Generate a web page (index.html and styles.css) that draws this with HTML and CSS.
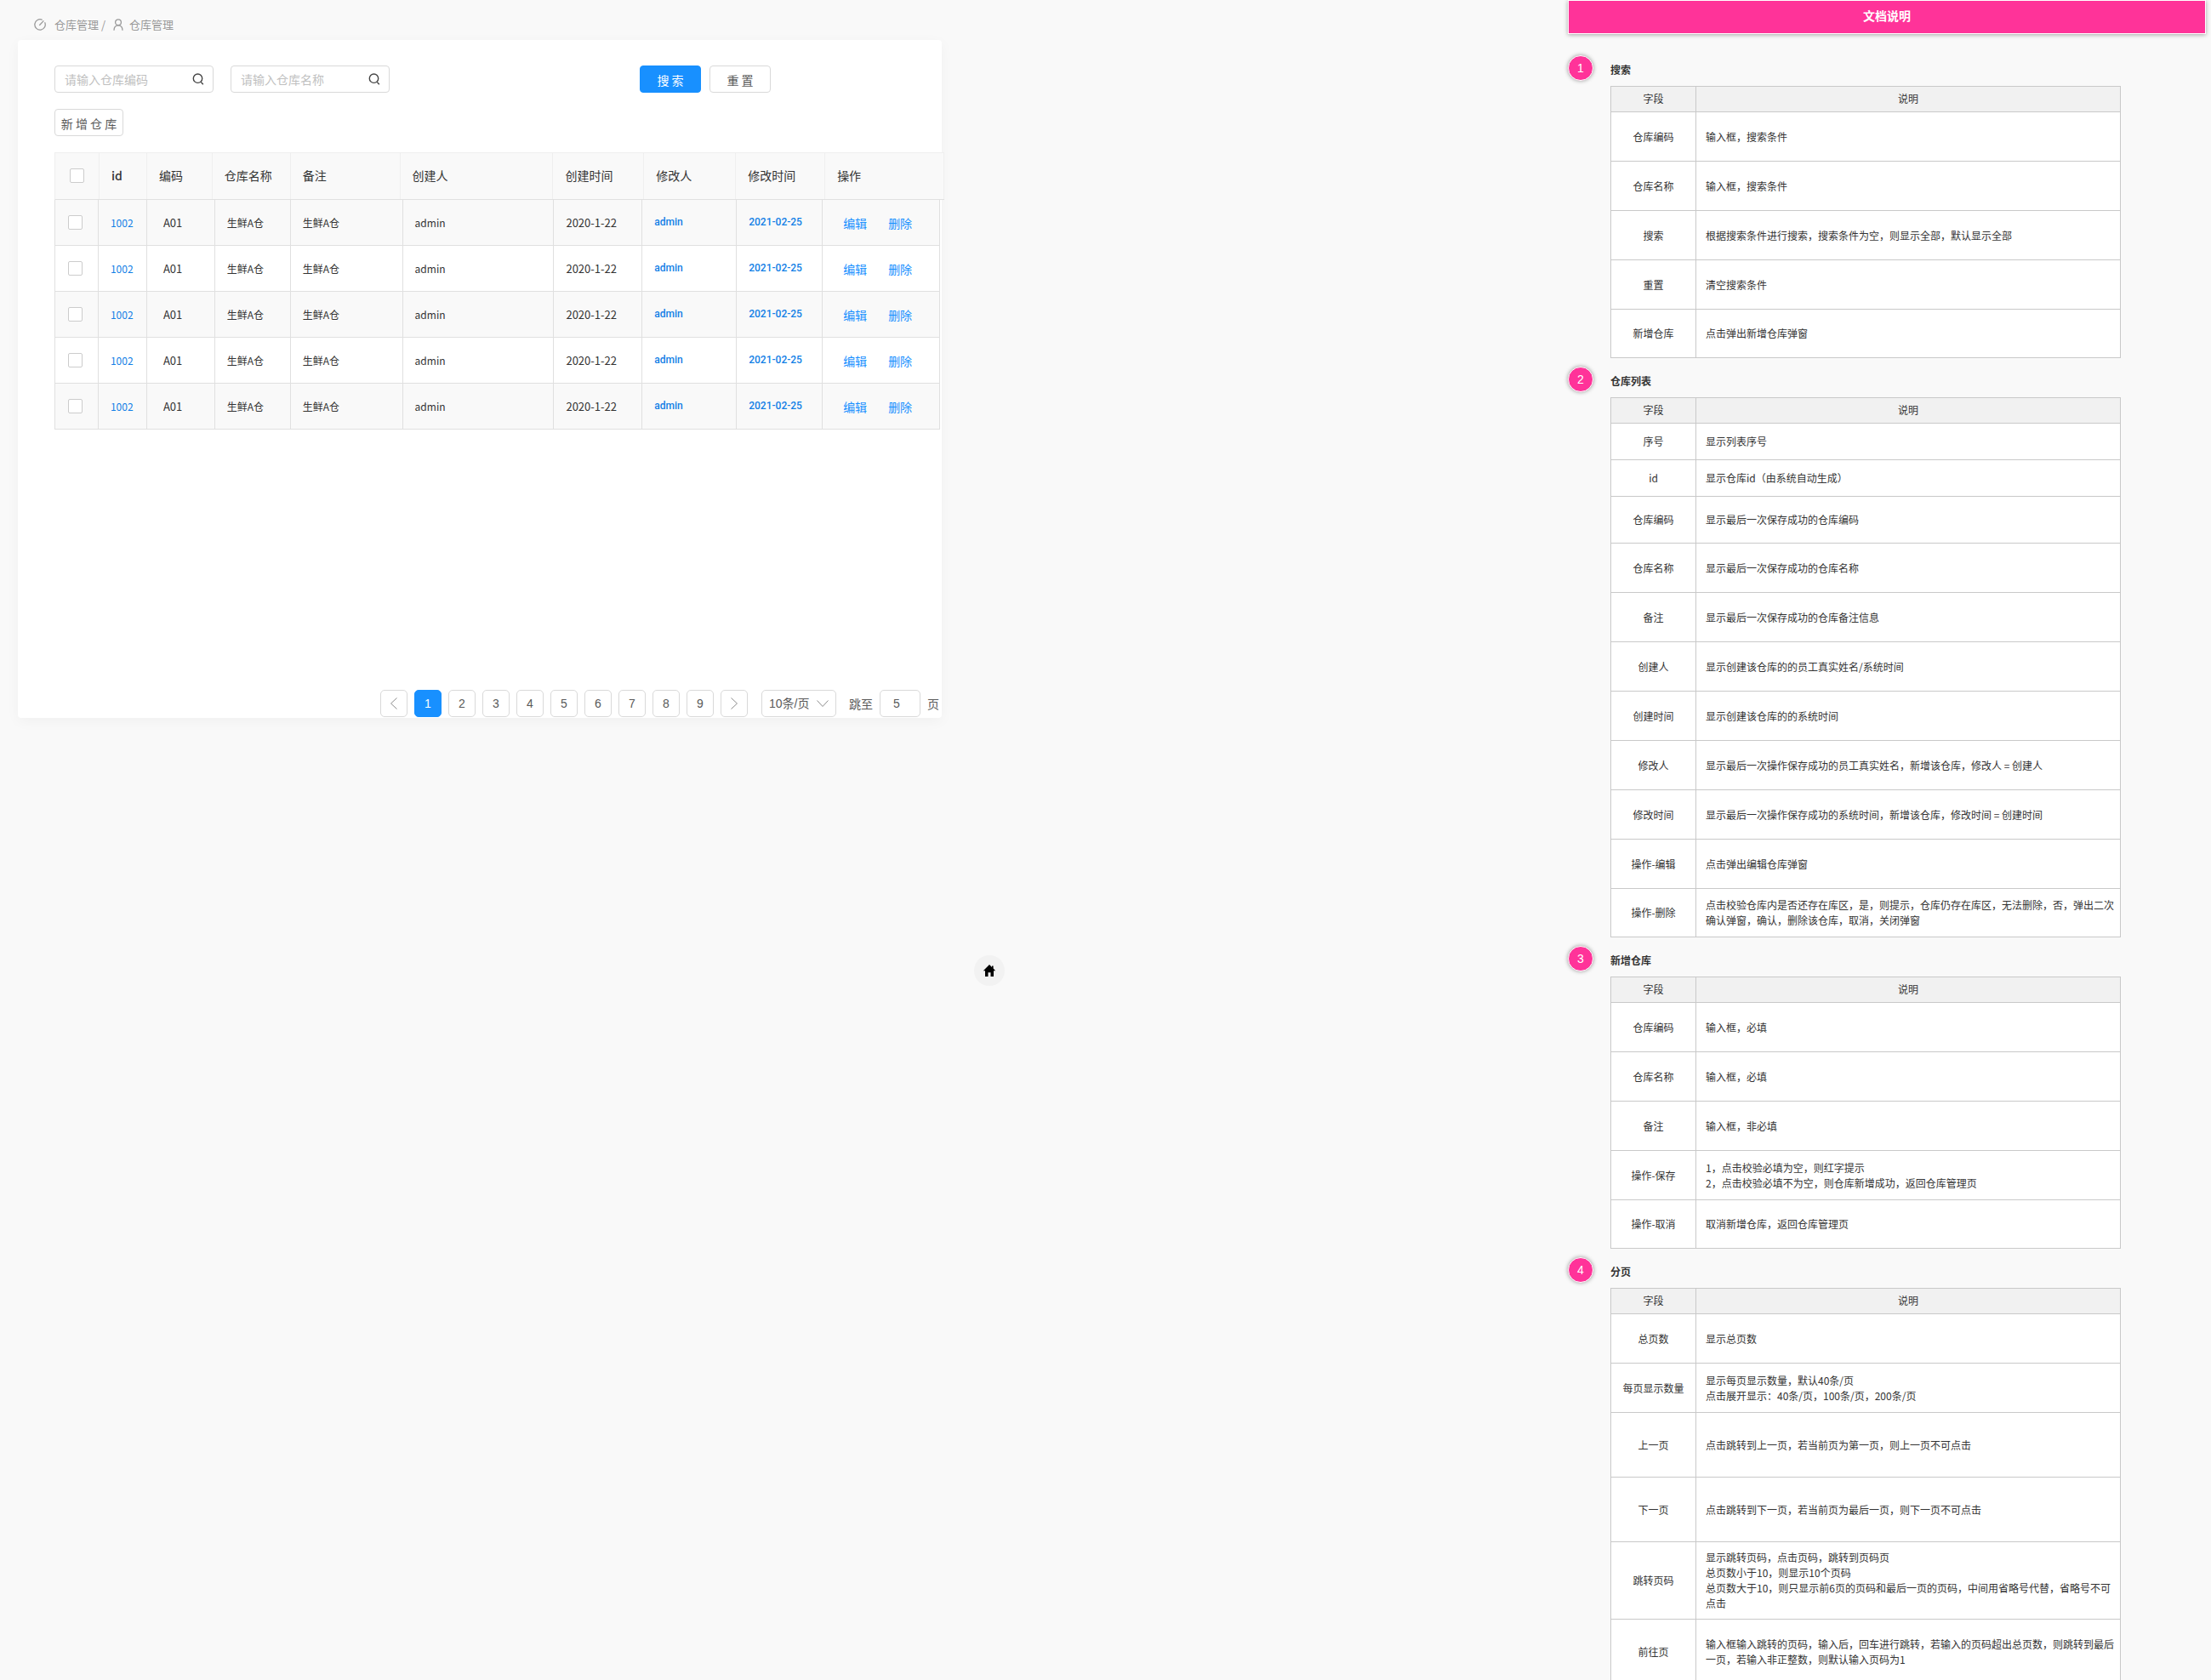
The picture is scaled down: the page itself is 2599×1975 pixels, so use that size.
FILE: index.html
```html
<!DOCTYPE html>
<html lang="zh-CN">
<head>
<meta charset="utf-8">
<meta name="viewport" content="width=device-width, initial-scale=1">
<title>仓库管理</title>
<link rel="stylesheet" href="styles.css">
</head>
<body>
<div class="page">
  <main class="workspace">
    <nav class="crumbs" aria-label="面包屑">
      <svg class="icon-dash" viewBox="0 0 14 14"><path d="M12.6 4.2A6.2 6.2 0 1 1 9.6 1.3M6.3 7.8 11.4 2.4"/></svg>
      <a href="#">仓库管理 /</a>
      <svg class="icon-user" viewBox="0 0 12 14"><circle cx="6" cy="4.2" r="3.4"/><path d="M1 13.800C1 9.700 3.200 7.800 6 7.800S11 9.700 11 13.800"/></svg>
      <a href="#">仓库管理</a>
    </nav>

    <section class="card">
      <form class="filters">
        <div class="search">
          <input class="search-input" type="text" aria-label="仓库编码" placeholder="请输入仓库编码">
          <button class="search-btn" type="button" aria-label="查询编码"><svg viewBox="0 0 14 14"><circle cx="6.500" cy="6.200" r="5.200"/><path d="M10.200 10.400 12.800 13.300"/></svg></button>
        </div>
        <div class="search">
          <input class="search-input" type="text" aria-label="仓库名称" placeholder="请输入仓库名称">
          <button class="search-btn" type="button" aria-label="查询名称"><svg viewBox="0 0 14 14"><circle cx="6.500" cy="6.200" r="5.200"/><path d="M10.200 10.400 12.800 13.300"/></svg></button>
        </div>
        <div class="filter-actions">
          <button class="btn btn-primary" type="button">搜 索</button>
          <button class="btn" type="button">重 置</button>
        </div>
      </form>
      <button class="btn btn-add" type="button">新 增 仓 库</button>

      <table class="grid">
        <thead>
          <tr><th><input type="checkbox" aria-label="全选"></th><th class="strong">id</th><th>编码</th><th>仓库名称</th><th>备注</th><th>创建人</th><th>创建时间</th><th>修改人</th><th>修改时间</th><th>操作</th></tr>
        </thead>
        <tbody>
          <tr><td><input type="checkbox" aria-label="选择第1行"></td><td><a href="#">1002</a></td><td class="num code">A01</td><td>生鲜A仓</td><td>生鲜A仓</td><td>admin</td><td class="num">2020-1-22</td><td class="mod">admin</td><td class="mod">2021-02-25</td><td class="ops"><a href="#">编辑</a><a href="#">删除</a></td></tr>
          <tr><td><input type="checkbox" aria-label="选择第2行"></td><td><a href="#">1002</a></td><td class="num code">A01</td><td>生鲜A仓</td><td>生鲜A仓</td><td>admin</td><td class="num">2020-1-22</td><td class="mod">admin</td><td class="mod">2021-02-25</td><td class="ops"><a href="#">编辑</a><a href="#">删除</a></td></tr>
          <tr><td><input type="checkbox" aria-label="选择第3行"></td><td><a href="#">1002</a></td><td class="num code">A01</td><td>生鲜A仓</td><td>生鲜A仓</td><td>admin</td><td class="num">2020-1-22</td><td class="mod">admin</td><td class="mod">2021-02-25</td><td class="ops"><a href="#">编辑</a><a href="#">删除</a></td></tr>
          <tr><td><input type="checkbox" aria-label="选择第4行"></td><td><a href="#">1002</a></td><td class="num code">A01</td><td>生鲜A仓</td><td>生鲜A仓</td><td>admin</td><td class="num">2020-1-22</td><td class="mod">admin</td><td class="mod">2021-02-25</td><td class="ops"><a href="#">编辑</a><a href="#">删除</a></td></tr>
          <tr><td><input type="checkbox" aria-label="选择第5行"></td><td><a href="#">1002</a></td><td class="num code">A01</td><td>生鲜A仓</td><td>生鲜A仓</td><td>admin</td><td class="num">2020-1-22</td><td class="mod">admin</td><td class="mod">2021-02-25</td><td class="ops"><a href="#">编辑</a><a href="#">删除</a></td></tr>
        </tbody>
      </table>

      <nav class="pager" aria-label="分页">
        <button class="page-btn" type="button" aria-label="上一页"><svg viewBox="0 0 14 14"><path d="M10.500 0.500 3.500 7 10.500 13.500"/></svg></button>
        <button class="page-btn current" type="button">1</button>
        <button class="page-btn" type="button">2</button>
        <button class="page-btn" type="button">3</button>
        <button class="page-btn" type="button">4</button>
        <button class="page-btn" type="button">5</button>
        <button class="page-btn" type="button">6</button>
        <button class="page-btn" type="button">7</button>
        <button class="page-btn" type="button">8</button>
        <button class="page-btn" type="button">9</button>
        <button class="page-btn" type="button" aria-label="下一页"><svg viewBox="0 0 14 14"><path d="M3.500 0.500 10.500 7 3.500 13.500"/></svg></button>
        <div class="size">
          <select class="size-select" aria-label="每页条数"><option>10条/页</option></select>
          <svg class="size-arrow" viewBox="0 0 14 14"><path d="M0.500 3.500 7 10.500 13.500 3.500"/></svg>
        </div>
        <label class="jump" for="jump">跳至</label>
        <input class="jump-input" id="jump" type="text" value="5">
        <span class="jump-unit">页</span>
      </nav>
    </section>
  </main>

  <div class="canvas">
    <a class="home" href="#" aria-label="首页"><svg viewBox="0 0 16 16"><path d="M8 1 0.800 8.200H3V15H6.500V10.200H9.500V15H13V8.200H15.200L12.600 5.600V2.500H11V4Z"/></svg></a>
  </div>

  <aside class="doc">
    <h1 class="banner">文档说明</h1>

    <section class="note">
      <header class="note-head"><span class="badge">1</span><h2>搜索</h2></header>
      <table class="spec">
        <colgroup><col class="col-key"><col></colgroup>
        <thead><tr><th>字段</th><th>说明</th></tr></thead>
        <tbody>
          <tr><th>仓库编码</th><td>输入框，搜索条件</td></tr>
          <tr><th>仓库名称</th><td>输入框，搜索条件</td></tr>
          <tr><th>搜索</th><td>根据搜索条件进行搜索，搜索条件为空，则显示全部，默认显示全部</td></tr>
          <tr><th>重置</th><td>清空搜索条件</td></tr>
          <tr><th>新增仓库</th><td>点击弹出新增仓库弹窗</td></tr>
        </tbody>
      </table>
    </section>

    <section class="note">
      <header class="note-head"><span class="badge">2</span><h2>仓库列表</h2></header>
      <table class="spec">
        <colgroup><col class="col-key"><col></colgroup>
        <thead><tr><th>字段</th><th>说明</th></tr></thead>
        <tbody>
          <tr class="short"><th>序号</th><td>显示列表序号</td></tr>
          <tr class="short"><th>id</th><td>显示仓库id（由系统自动生成）</td></tr>
          <tr class="medium"><th>仓库编码</th><td>显示最后一次保存成功的仓库编码</td></tr>
          <tr><th>仓库名称</th><td>显示最后一次保存成功的仓库名称</td></tr>
          <tr><th>备注</th><td>显示最后一次保存成功的仓库备注信息</td></tr>
          <tr><th>创建人</th><td>显示创建该仓库的的员工真实姓名/系统时间</td></tr>
          <tr><th>创建时间</th><td>显示创建该仓库的的系统时间</td></tr>
          <tr><th>修改人</th><td>显示最后一次操作保存成功的员工真实姓名，新增该仓库，修改人 = 创建人</td></tr>
          <tr><th>修改时间</th><td>显示最后一次操作保存成功的系统时间，新增该仓库，修改时间 = 创建时间</td></tr>
          <tr><th>操作-编辑</th><td>点击弹出编辑仓库弹窗</td></tr>
          <tr><th>操作-删除</th><td>点击校验仓库内是否还存在库区，是，则提示，仓库仍存在库区，无法删除，否，弹出二次确认弹窗，确认，删除该仓库，取消，关闭弹窗</td></tr>
        </tbody>
      </table>
    </section>

    <section class="note">
      <header class="note-head"><span class="badge">3</span><h2>新增仓库</h2></header>
      <table class="spec">
        <colgroup><col class="col-key"><col></colgroup>
        <thead><tr><th>字段</th><th>说明</th></tr></thead>
        <tbody>
          <tr><th>仓库编码</th><td>输入框，必填</td></tr>
          <tr><th>仓库名称</th><td>输入框，必填</td></tr>
          <tr><th>备注</th><td>输入框，非必填</td></tr>
          <tr><th>操作-保存</th><td>1，点击校验必填为空，则红字提示<br>2，点击校验必填不为空，则仓库新增成功，返回仓库管理页</td></tr>
          <tr><th>操作-取消</th><td>取消新增仓库，返回仓库管理页</td></tr>
        </tbody>
      </table>
    </section>

    <section class="note">
      <header class="note-head"><span class="badge">4</span><h2>分页</h2></header>
      <table class="spec">
        <colgroup><col class="col-key"><col></colgroup>
        <thead><tr><th>字段</th><th>说明</th></tr></thead>
        <tbody>
          <tr><th>总页数</th><td>显示总页数</td></tr>
          <tr><th>每页显示数量</th><td>显示每页显示数量，默认40条/页<br>点击展开显示：40条/页，100条/页，200条/页</td></tr>
          <tr class="tall"><th>上一页</th><td>点击跳转到上一页，若当前页为第一页，则上一页不可点击</td></tr>
          <tr class="tall"><th>下一页</th><td>点击跳转到下一页，若当前页为最后一页，则下一页不可点击</td></tr>
          <tr class="taller"><th>跳转页码</th><td>显示跳转页码，点击页码，跳转到页码页<br>总页数小于10，则显示10个页码<br>总页数大于10，则只显示前6页的页码和最后一页的页码，中间用省略号代替，省略号不可点击</td></tr>
          <tr class="tall"><th>前往页</th><td>输入框输入跳转的页码，输入后，回车进行跳转，若输入的页码超出总页数，则跳转到最后一页，若输入非正整数，则默认输入页码为1</td></tr>
        </tbody>
      </table>
    </section>
  </aside>
</div>
</body>
</html>
```
FILE: styles.css
```css
* {
  box-sizing: border-box;
}

body {
  margin: 0;
  background: #f9f9f9;
  color: #333;
  font: 12px/18px "Noto Sans CJK SC", sans-serif;
}

button,
input,
select {
  margin: 0;
  font: inherit;
  color: inherit;
}

a {
  color: inherit;
  text-decoration: none;
}

svg {
  fill: none;
  stroke: currentColor;
}

.page {
  display: grid;
  grid-template-columns: 1107fr 736fr 750fr;
  height: 100vh;
  padding-right: 6px;
  overflow: hidden;
}

/* Left: the warehouse list */

.workspace {
  min-width: 0;
}

.crumbs {
  display: flex;
  align-items: center;
  height: 47px;
  padding: 11px 0 0 40px;
  color: #999;
  font-size: 13px;
}

.icon-dash {
  width: 14px;
  height: 14px;
  margin-right: 10px;
  stroke-width: 1.3;
}

.icon-user {
  width: 12px;
  height: 14px;
  margin: 0 7px 0 9px;
  stroke-width: 1.3;
}

.card {
  display: flex;
  flex-direction: column;
  min-height: 797px;
  margin-left: 21px;
  padding: 30px 0 1px 43px;
  border-radius: 4px;
  background: #fff;
  box-shadow: 0 4px 16px rgba(0, 0, 0, 0.04);
}

.filters {
  display: flex;
  gap: 20px;
}

.search {
  display: flex;
  align-items: center;
  width: 187px;
  height: 32px;
  border: 1px solid #d9d9d9;
  border-radius: 4px;
  background: #fff;
}

.search-input {
  flex: 1;
  min-width: 0;
  padding: 0 0 0 11px;
  border: 0;
  background: none;
  font-size: 14px;
  outline: 0;
}

.search-input::placeholder {
  color: #bfbfbf;
}

.search-btn {
  display: flex;
  padding: 0 10px 0 0;
  border: 0;
  background: none;
  color: #444;
}

.search-btn svg {
  width: 14px;
  height: 14px;
  stroke-width: 1.4;
}

.filter-actions {
  display: flex;
  gap: 10px;
  margin: 0 201px 0 auto;
}

.btn {
  width: 72px;
  height: 32px;
  padding: 1px 0 0;
  border: 1px solid #d9d9d9;
  border-radius: 4px;
  background: #fff;
  color: #595959;
  font-size: 14px;
}

.btn-primary {
  border-color: #1890ff;
  background: #1890ff;
  color: #fff;
}

.btn-add {
  width: 81px;
  margin: 19px 0;
}

.grid {
  display: block;
  margin-right: -3px;
}

.grid thead,
.grid tbody {
  display: block;
}

.grid tbody {
  margin-right: 5px;
}

.grid tr {
  display: grid;
}

.grid thead tr {
  grid-template-columns: 52fr 56fr 77fr 92fr 129fr 180fr 107fr 108fr 105fr 140fr;
  height: 56px;
  border: solid #efefef;
  border-width: 1px 0 1px 1px;
  border-bottom-color: #e0e0e0;
  background: #f9f9f9;
}

.grid tbody tr {
  grid-template-columns: 51fr 57fr 80fr 89fr 132fr 178fr 104fr 111fr 101fr 138fr;
  height: 54px;
  border: solid #e0e0e0;
  border-width: 0 0 1px 1px;
  background: #fff;
}

.grid tbody tr:nth-child(odd) {
  background: #f9f9f9;
}

.grid th,
.grid td {
  display: flex;
  align-items: center;
  padding: 0 0 0 14px;
  border-right: 1px solid #e0e0e0;
  white-space: nowrap;
}

.grid th {
  padding-bottom: 2px;
  border-right-color: #efefef;
  font-size: 14px;
  font-weight: 400;
}

.grid th.strong {
  font-weight: 500;
}

.grid td {
  padding-top: 1px;
}

.grid th:first-child {
  padding-left: 17px;
}

.grid td:first-child {
  padding: 0 0 0 15px;
}

.grid a {
  color: #1280e6;
}

.grid td.num {
  font-size: 13px;
}

.grid td.code {
  padding-left: 19px;
}

.grid td.mod {
  padding: 0 0 2px 14px;
  color: #1280e6;
  font-family: Roboto, sans-serif;
  font-weight: 500;
}

.grid td.ops {
  gap: 25px;
  padding-left: 24px;
  font-size: 14px;
}

.grid td.ops a {
  color: #1890ff;
}

.grid input {
  width: 17px;
  height: 17px;
  border: 1px solid #ccc;
  border-radius: 2px;
  background: #fff;
  appearance: none;
}

.pager {
  display: flex;
  align-items: center;
  justify-content: flex-end;
  gap: 8px;
  margin-top: auto;
  padding-right: 3px;
  color: #595959;
  font-family: "Liberation Sans", "Noto Sans CJK SC", sans-serif;
  font-size: 14px;
}

.page-btn {
  display: flex;
  align-items: center;
  justify-content: center;
  width: 32px;
  height: 32px;
  padding: 0;
  border: 1px solid #d9d9d9;
  border-radius: 5px;
  background: #fff;
}

.page-btn svg,
.size-arrow {
  width: 14px;
  height: 14px;
  color: #8c8c8c;
}

.page-btn.current {
  border-color: #1890ff;
  background: #1890ff;
  color: #fff;
}

.size {
  position: relative;
  margin-left: 8px;
}

.size-select {
  width: 88px;
  height: 32px;
  padding: 0 0 0 8px;
  border: 1px solid #d9d9d9;
  border-radius: 5px;
  background: #fff;
  appearance: none;
}

.size-arrow {
  position: absolute;
  top: 9px;
  right: 9px;
  pointer-events: none;
}

.jump {
  margin-left: 7px;
  padding-top: 1px;
}

.jump-unit {
  padding-top: 1px;
}

.jump-input {
  width: 48px;
  height: 32px;
  padding: 0 0 0 15px;
  border: 1px solid #d9d9d9;
  border-radius: 5px;
  background: #fff;
}

/* Middle: empty canvas with the home shortcut */

.canvas {
  padding: 1123px 0 0 38px;
}

.home {
  display: flex;
  align-items: center;
  justify-content: center;
  width: 36px;
  height: 36px;
  border-radius: 50%;
  background: #f2f2f2;
  color: #000;
}

.home svg {
  width: 16px;
  height: 16px;
  fill: currentColor;
  stroke: none;
}

/* Right: the document notes */

.banner {
  height: 40px;
  margin: 0 0 15px;
  border: 1px solid #fff;
  background: #f39;
  box-shadow: 0 1px 5px rgba(0, 0, 0, 0.35);
  color: #fff;
  font-size: 14px;
  line-height: 34px;
  text-align: center;
}

.note-head {
  display: flex;
  align-items: flex-end;
  gap: 20px;
  height: 46px;
}

.badge {
  width: 30px;
  height: 30px;
  margin-bottom: 6px;
  border: 1px solid #fff;
  border-radius: 50%;
  background: #f39;
  box-shadow: 0 0 5px rgba(0, 0, 0, 0.4);
  color: #fff;
  font: 14px/28px "Liberation Sans", sans-serif;
  text-align: center;
}

.note-head h2 {
  margin: 0 0 10px;
  font-size: 12px;
}

.spec {
  width: 80%;
  margin-left: 50px;
  border-collapse: collapse;
  table-layout: fixed;
  background: #fff;
}

.col-key {
  width: 100px;
}

.spec th,
.spec td {
  padding: 0;
  border: 1px solid #c9c9c9;
  font-weight: 400;
}

.spec td {
  padding: 0 4px 0 11px;
}

.spec thead tr {
  height: 30px;
  background: #f1f1f1;
}

.spec thead th {
  padding-bottom: 2px;
}

.spec tbody tr {
  height: 58px;
}

.spec tbody tr:last-child {
  height: 57px;
}

.spec tbody .short {
  height: 43px;
}

.spec tbody .medium {
  height: 55px;
}

.spec tbody .tall,
.spec tbody .tall:last-child {
  height: 76px;
}

.spec tbody .taller {
  height: 91px;
}
```
